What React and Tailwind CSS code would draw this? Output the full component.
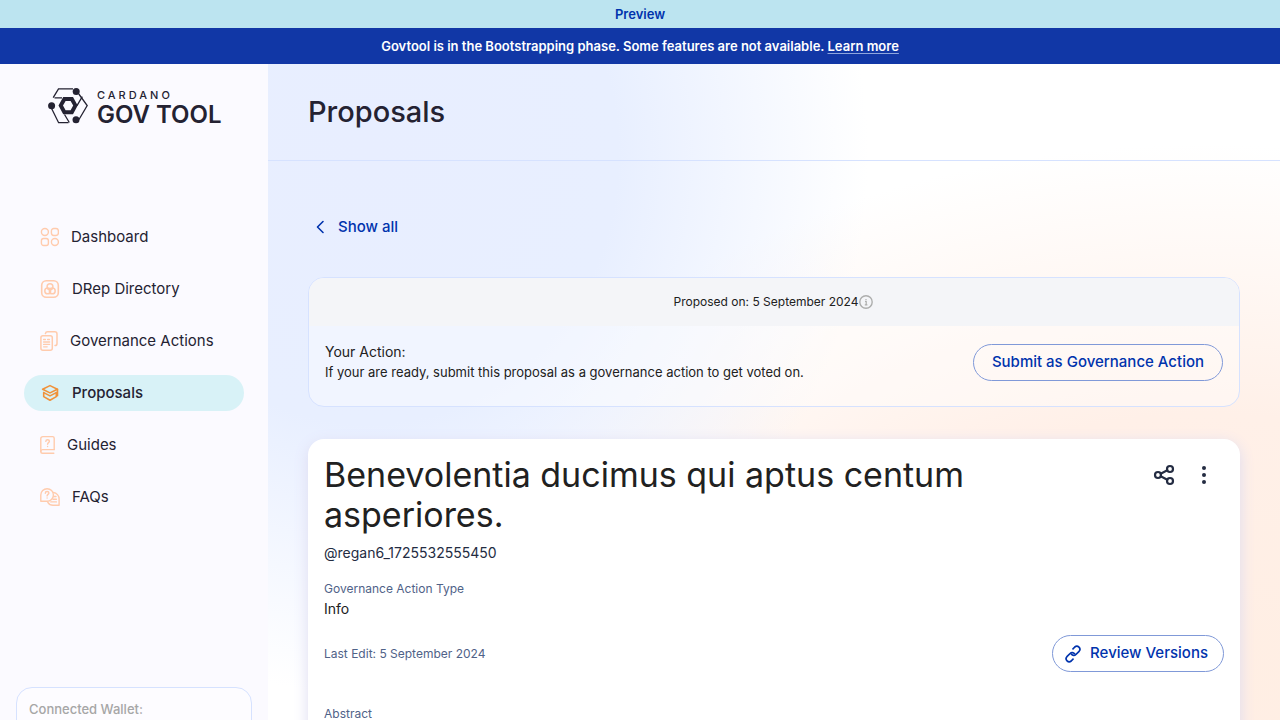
import React from "react";

const iconProps = {
  fill: "none",
  stroke: "currentColor",
  strokeLinecap: "round",
  strokeLinejoin: "round",
  "aria-hidden": true,
};

function DashboardIcon() {
  return (
    <svg {...iconProps} width="19" height="20" viewBox="0 0 19 20" strokeWidth="1.4">
      <circle cx="4.9" cy="5" r="3.5" />
      <rect x="11.4" y="1.5" width="7" height="7" rx="2.4" />
      <rect x="1.4" y="11.5" width="7" height="7" rx="2.2" />
      <circle cx="14.9" cy="15" r="3.5" />
    </svg>
  );
}

function DRepIcon() {
  return (
    <svg {...iconProps} width="20" height="20" viewBox="0 0 20 20" strokeWidth="1.5">
      <rect x="1.7" y="1.7" width="16.6" height="16.6" rx="4.600" strokeWidth="1.600" />
      <circle cx="10" cy="7.700" r="2.900" />
      <circle cx="7.700" cy="11.900" r="2.900" />
      <circle cx="12.300" cy="11.900" r="2.900" />
    </svg>
  );
}

function ActionsIcon() {
  return (
    <svg {...iconProps} width="18" height="20" viewBox="0 0 18 20" strokeWidth="1.500">
      <rect x="0.9" y="4.800" width="11.400" height="14.400" rx="2" />
      <path d="M5.400 2.600C5.600 1.400 6.400.8 7.600.8h7.200c1.400 0 2.200.8 2.200 2.200v9.400c0 1.400-.7 2.200-2 2.200" />
      <path d="M3.600 8.500h1.800M7.600 8.500h1.800M3.600 11h6M3.600 13.400h6M3.600 15.800h3.600" strokeWidth="1.300" />
    </svg>
  );
}

function ProposalsIcon() {
  return (
    <svg {...iconProps} width="20" height="20" viewBox="0 0 20 20" strokeWidth="1.600">
      <path d="M10 2.600 17.400 6.200 10 9.900 2.600 6.200Z" />
      <path d="M17.500 6.400v6.400" />
      <path d="M3.700 9.600 10 12.900l6.300-3.300" />
      <path d="M3.700 9.600v4L10 17.300l6.300-3.700v-4" />
    </svg>
  );
}

function GuidesIcon() {
  return (
    <svg {...iconProps} width="15" height="20" viewBox="0 0 15 20" strokeWidth="1.400">
      <path d="M14.200 14.600V3.200c0-1-.6-1.600-1.600-1.600H2.800c-1.200 0-2 .8-2 2v12.800" />
      <path d="M14.200 14.600H2.600a1.800 1.800 0 0 0 0 3.600h11.200" />
      <path d="M5.800 6.400c0-1.100.8-1.700 1.800-1.700s1.800.7 1.800 1.600c0 1.300-1.800 1.400-1.800 2.900" />
      <path d="M7.600 11.400v.1" />
    </svg>
  );
}

function FaqIcon() {
  return (
    <svg {...iconProps} width="20" height="20" viewBox="0 0 20 20" strokeWidth="1.400">
      <path d="M7 14.300H.8V8A6.300 6.300 0 1 1 7 14.300Z" />
      <path d="M5.300 6.200c0-1.100.8-1.700 1.800-1.700s1.800.6 1.800 1.600c0 1.200-1.800 1.400-1.800 2.800M7.100 11v.1" />
      <path d="M13.300 5.500A6.400 6.400 0 0 1 19.100 12v6.200H13c-2.200 0-4.100-1.100-5.200-2.900" />
      <path d="M13.800 9.500h2.200M13 12.200h3.400M10.800 14.900h5.600" />
    </svg>
  );
}

function LogoMark() {
  return (
    <svg width="40" height="36" viewBox="0 0 40 36" fill="none" stroke="#242232" strokeWidth="1.300" aria-hidden="true">
      <path d="M25 .8H10.500L5.200 9.700" />
      <path d="M3.600 20.500 10.600 34.700H20.500" />
      <path d="M30.800 6 39.200 17.500 31 31.500" />
      <path d="M6.500 9.900H14M34.300 8.600 29 17.700M16.500 26.500 21.300 34.500" />
      <circle cx="28.200" cy="3.500" r="3.500" fill="#242232" stroke="none" />
      <circle cx="3.600" cy="17.700" r="3.500" fill="#242232" stroke="none" />
      <circle cx="28" cy="31.800" r="3.500" fill="#242232" stroke="none" />
      <path
        fill="#242232"
        stroke="none"
        fillRule="evenodd"
        d="M15.200 9h9.800l4.700 8.500-4.700 8.700h-9.800l-4.700-8.700ZM17.600 12.900l-2.600 4.600 2.600 4.700h5l2.600-4.700-2.600-4.600Z"
      />
    </svg>
  );
}

function ShareIcon() {
  return (
    <svg {...iconProps} width="24" height="24" viewBox="0 0 24 24" strokeWidth="2.200">
      <circle cx="18" cy="6" r="3" />
      <circle cx="6" cy="12" r="3" />
      <circle cx="18" cy="18" r="3" />
      <path d="m8.700 10.700 6.600-3.400M8.700 13.300l6.600 3.400" />
    </svg>
  );
}

function DotsIcon() {
  return (
    <svg width="24" height="24" viewBox="0 0 24 24" fill="currentColor" aria-hidden="true">
      <circle cx="12" cy="5" r="2" />
      <circle cx="12" cy="12" r="2" />
      <circle cx="12" cy="19" r="2" />
    </svg>
  );
}

function LinkIcon() {
  return (
    <svg {...iconProps} width="18" height="18" viewBox="0 0 18 18" strokeWidth="1.700">
      <path d="M6.300 11.600 11.700 6.400" strokeWidth="0" />
      <path d="M7.400 9.300a3 3 0 0 0 4.500.2l3.200-3.200a3.050 3.050 0 0 0-4.300-4.300L9 3.800" />
      <path d="M10.600 8.700a3 3 0 0 0-4.500-.2l-3.200 3.200a3.050 3.050 0 0 0 4.300 4.300L9 14.200" />
    </svg>
  );
}

function InfoIcon() {
  return (
    <svg width="16" height="16" viewBox="0 0 16 16" fill="none" stroke="#adaead" aria-hidden="true">
      <circle cx="8" cy="8" r="6.200" strokeWidth="1.400" />
      <path d="M7 7.400h1.200v3.400M6.800 10.900h2.600M8 4.900v1.200" strokeWidth="1.200" />
    </svg>
  );
}

const navItems = [
  { label: "Dashboard", Icon: DashboardIcon },
  { label: "DRep Directory", Icon: DRepIcon },
  { label: "Governance Actions", Icon: ActionsIcon },
  { label: "Proposals", Icon: ProposalsIcon, active: true },
  { label: "Guides", Icon: GuidesIcon },
  { label: "FAQs", Icon: FaqIcon },
];

function Sidebar() {
  return (
    <aside className="sticky top-0 flex h-screen w-[268px] shrink-0 flex-col bg-[#fbfaff]">
      <a href="#home" className="mt-6 ml-12 flex h-10 items-start gap-[9px] text-[#242232]">
        <LogoMark />
        <span className="flex flex-col">
          <span className="text-[11px] leading-[14px] font-medium tracking-[3px]">CARDANO</span>
          <span className="text-2xl leading-[26px] font-semibold whitespace-nowrap">GOV TOOL</span>
        </span>
      </a>
      <nav className="mt-[91px] flex flex-col gap-4 px-6">
        {navItems.map(({ label, Icon, active }) => (
          <a
            key={label}
            href="#nav"
            aria-current={active ? "page" : undefined}
            className={
              active
                ? "flex h-9 items-center gap-3 rounded-full bg-[#d8f2f7] px-4 text-[15px] font-medium text-[#242232]"
                : "flex h-9 items-center gap-3 rounded-full px-4 text-[15px] text-[#242232]"
            }
          >
            <span className={active ? "text-[#f0923a]" : "text-[#ffcbad]"}>
              <Icon />
            </span>
            {label}
          </a>
        ))}
      </nav>
      <section className="mx-4 mt-auto mb-4 h-[81px] rounded-2xl border border-[#d6e2ff] bg-[#fdfcff] px-3 py-3">
        <h2 className="text-[13px] leading-[18px] font-medium text-[#a6a6a6]">Connected Wallet:</h2>
      </section>
    </aside>
  );
}

function OutlineButton({ children, className }) {
  return (
    <button
      type="button"
      className={`flex h-[37px] shrink-0 items-center gap-2 rounded-full border border-[#8099d8] text-[15px] font-medium text-[#0033ad] ${className}`}
    >
      {children}
    </button>
  );
}

export default function App() {
  return (
    <div className="min-h-screen bg-white font-[Inter,sans-serif] text-[#212121]">
      <div className="bg-[#bce4f0] text-center text-[13px] leading-7 font-semibold text-[#0033ad]">Preview</div>
      <div className="bg-[#1137a6] text-center text-[13px] leading-9 font-semibold text-white">
        Govtool is in the Bootstrapping phase. Some features are not available.{" "}
        <a href="#learn" className="underline decoration-[#8fa6dd] underline-offset-2">
          Learn more
        </a>
      </div>
      <div className="flex">
        <Sidebar />
        <main className="min-w-0 flex-1 bg-[radial-gradient(ellipse_500px_540px_at_100px_90px,#e8eeff_0%,#e8efff_50%,#e8efff00_100%),radial-gradient(ellipse_800px_540px_at_940px_620px,#ffeee3_0%,#fff0e8_50%,#fff6f000_100%)]">
          <header className="flex h-[97px] items-center border-b border-[#d6e2ff] px-10">
            <h1 className="text-[29px] leading-9 font-medium text-[#242232]">Proposals</h1>
          </header>
          <div className="px-10 pt-[50px] pb-10">
            <a href="#all" className="inline-flex h-8 items-center gap-2 pl-1 text-[15px] font-medium text-[#0033ad]">
              <svg {...iconProps} width="18" height="18" viewBox="0 0 18 18" strokeWidth="1.600">
                <path d="M11 3.500 5.500 9l5.500 5.500" />
              </svg>
              Show all
            </a>

            <section className="mt-[34px] overflow-hidden rounded-2xl border border-[#d6e2ff] bg-white/40">
              <div className="flex h-12 items-center justify-center bg-[#f4f5f8] text-xs">
                Proposed on: 5 September 2024
                <InfoIcon />
              </div>
              <div className="flex items-start justify-between gap-4 px-4 pt-[18px] pb-[25px]">
                <div>
                  <h2 className="text-sm leading-4">Your Action:</h2>
                  <p className="mt-1 text-[13px] leading-4">
                    If your are ready, submit this proposal as a governance action to get voted on.
                  </p>
                </div>
                <OutlineButton className="px-[18px]">Submit as Governance Action</OutlineButton>
              </div>
            </section>

            <article className="mt-8 rounded-2xl bg-white px-4 pt-4 pb-8 shadow-[0_4px_15px_0_#dddbf1]">
              <div className="flex items-start gap-4">
                <h2 className="max-w-[720px] text-[34px] leading-10">Benevolentia ducimus qui aptus centum asperiores.</h2>
                <div className="ml-auto flex text-[#242c42]">
                  <button type="button" aria-label="Share" className="flex size-10 items-center justify-center">
                    <ShareIcon />
                  </button>
                  <button type="button" aria-label="More options" className="flex size-10 items-center justify-center">
                    <DotsIcon />
                  </button>
                </div>
              </div>
              <p className="mt-2 text-sm leading-5 text-[#242c42]">@regan6_1725532555450</p>
              <h3 className="mt-4 text-xs leading-5 text-[#506288]">Governance Action Type</h3>
              <p className="text-sm leading-5">Info</p>
              <div className="mt-4 flex items-center justify-between">
                <p className="text-xs text-[#506288]">Last Edit: 5 September 2024</p>
                <OutlineButton className="pr-[15px] pl-[11px]">
                  <LinkIcon />
                  Review Versions
                </OutlineButton>
              </div>
              <h3 className="mt-8 text-xs leading-5 text-[#506288]">Abstract</h3>
            </article>
          </div>
        </main>
      </div>
    </div>
  );
}
